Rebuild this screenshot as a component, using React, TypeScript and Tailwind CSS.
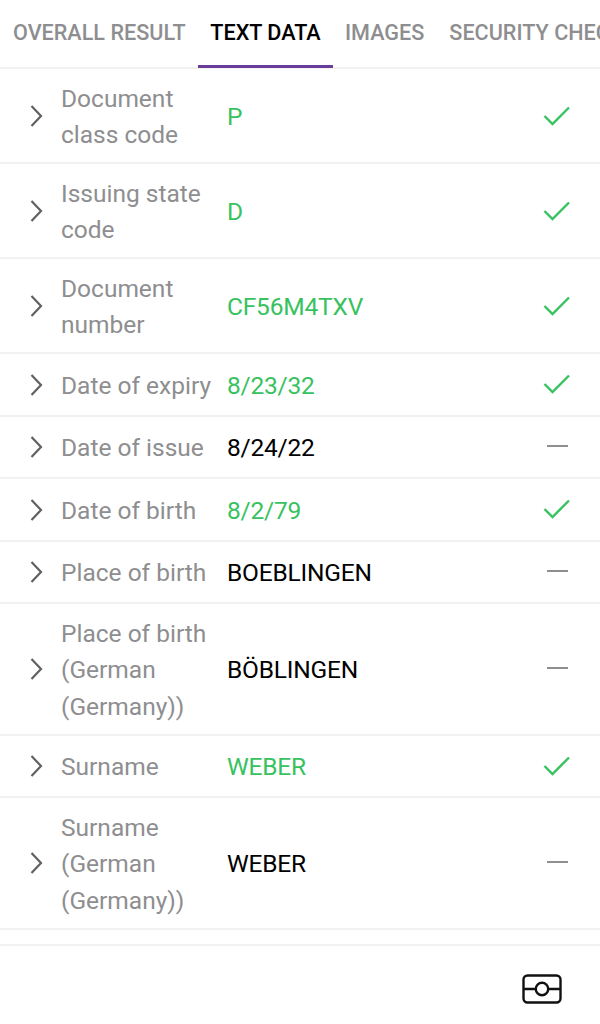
import React from 'react';

const rows = [
  { label: ['Document', 'class code'], value: 'P', ok: true },
  { label: ['Issuing state', 'code'], value: 'D', ok: true },
  { label: ['Document', 'number'], value: 'CF56M4TXV', ok: true },
  { label: ['Date of expiry'], value: '8/23/32', ok: true },
  { label: ['Date of issue'], value: '8/24/22', ok: false },
  { label: ['Date of birth'], value: '8/2/79', ok: true },
  { label: ['Place of birth'], value: 'BOEBLINGEN', ok: false },
  { label: ['Place of birth', '(German', '(Germany))'], value: 'BÖBLINGEN', ok: false },
  { label: ['Surname'], value: 'WEBER', ok: true },
  { label: ['Surname', '(German', '(Germany))'], value: 'WEBER', ok: false },
];

const Chevron = () => (
  <svg width="14" height="24" viewBox="0 0 14 24" fill="none" stroke="#5f6164" strokeWidth="2.2">
    <path d="M2.5 2 L12 12 L2.5 22" />
  </svg>
);

const Check = () => (
  <svg width="28" height="22" viewBox="0 0 28 22" fill="none" stroke="#37c25f" strokeWidth="2.4">
    <path d="M1.5 11 L9.5 19 L26 2.5" />
  </svg>
);

const App = () => {
  return (
    <div className="w-[600px] h-[1024px] overflow-hidden bg-white flex flex-col font-['Roboto',sans-serif]">
      {/* Tabs */}
      <div className="h-[69px] shrink-0 flex border-b-2 border-[#f2f2f3] text-[21.6px] font-medium whitespace-nowrap">
        <div className="pl-[13px] w-[198px] shrink-0 pt-[17px] text-[#8e8e90]">OVERALL RESULT</div>
        <div className="w-[135px] shrink-0 h-[68px] border-b-[3px] border-[#6a3d9a] text-center pt-[17px] text-black">TEXT DATA</div>
        <div className="pl-[12px] pr-[12px] pt-[17px] text-[#8e8e90]">IMAGES</div>
        <div className="pl-[13px] pt-[17px] text-[#8e8e90]">SECURITY CHECKS</div>
      </div>

      {/* Rows */}
      <div className="flex flex-col text-[24.5px] leading-[36.5px]">
        {rows.map((row, index) => (
          <div key={index} className="flex items-center min-h-[62.5px] border-b-2 border-[#f2f2f3] pt-[11.5px] pb-[8.5px] pl-[29px]">
            <div className="w-[32px] shrink-0 flex items-center mb-[2px]">
              <Chevron />
            </div>
            <div className="w-[166px] shrink-0 text-[#8e8e90] whitespace-nowrap">
              {row.label.map((line, i) => (
                <div key={i}>{line}</div>
              ))}
            </div>
            <div className={`flex-1 tracking-[-0.2px] ${row.ok ? 'text-[#37c25f]' : 'text-black'}`}>{row.value}</div>
            <div className="w-[28px] mr-[29px] flex justify-center">
              {row.ok ? <div className="mb-[3px]"><Check /></div> : <div className="w-[21px] h-[2px] mb-[4px] bg-[#8f8f91]" />}
            </div>
          </div>
        ))}
      </div>

      <div className="h-[16px] shrink-0 border-b-2 border-[#f2f2f3]" />

      {/* Bottom bar */}
      <div className="flex justify-end pt-[28px] pr-[38px]">
        <svg width="40" height="30" viewBox="0 0 40 30" fill="none" stroke="#111" strokeWidth="2.4">
          <rect x="1.5" y="1.5" width="37" height="27" rx="4" />
          <path d="M1.5 15 H13 M27 15 H38.5" />
          <circle cx="20" cy="15" r="6.2" />
        </svg>
      </div>
    </div>
  );
};

export default App;
